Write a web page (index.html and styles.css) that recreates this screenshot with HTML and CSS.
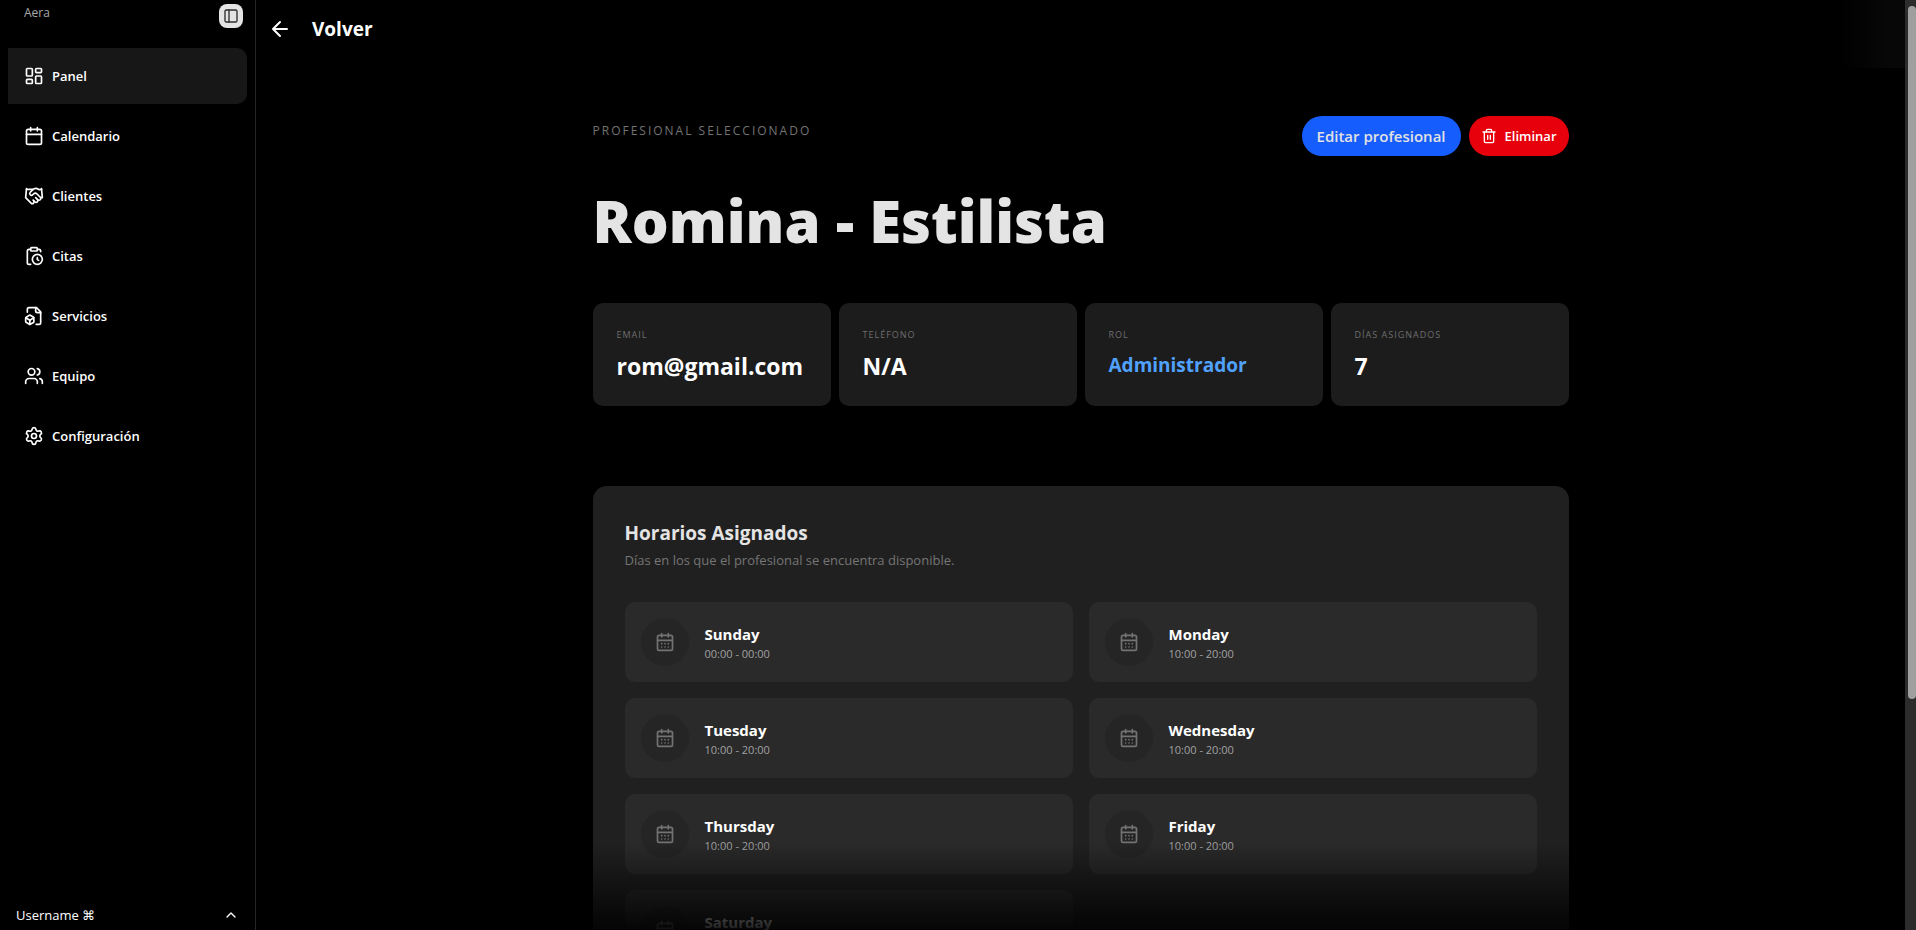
FILE: index.html
```html
<!DOCTYPE html>
<html lang="es">
<head>
    <meta charset="UTF-8">
    <meta name="viewport" content="width=device-width, initial-scale=1">
    <title>Aera</title>
    <link rel="stylesheet" href="styles.css">
</head>
<body>
    <!-- iconos compartidos -->
    <svg class="sprite" aria-hidden="true">
        <symbol id="cal-days" viewBox="0 0 24 24">
            <path d="M8 2v4M16 2v4M3 10h18M8 14h.01M12 14h.01M16 14h.01M8 18h.01M12 18h.01M16 18h.01"/>
            <rect width="18" height="18" x="3" y="4" rx="2"/>
        </symbol>
    </svg>

    <div class="app">
        <aside class="sidebar">
            <div class="brand">
                <span class="brand-name">Aera</span>
                <button class="toggle" aria-label="Menú">
                    <svg class="icon" viewBox="0 0 24 24"><rect width="18" height="18" x="3" y="3" rx="2"/><path d="M9 3v18"/></svg>
                </button>
            </div>
            <nav class="menu">
                <a href="#" class="menu-item active">
                    <svg class="icon" viewBox="0 0 24 24"><rect width="7" height="9" x="3" y="3" rx="1"/><rect width="7" height="5" x="14" y="3" rx="1"/><rect width="7" height="9" x="14" y="12" rx="1"/><rect width="7" height="5" x="3" y="16" rx="1"/></svg>
                    <span>Panel</span>
                </a>
                <a href="#" class="menu-item">
                    <svg class="icon" viewBox="0 0 24 24"><path d="M8 2v4M16 2v4M3 10h18"/><rect width="18" height="18" x="3" y="4" rx="2"/></svg>
                    <span>Calendario</span>
                </a>
                <a href="#" class="menu-item">
                    <svg class="icon" viewBox="0 0 24 24"><path d="m11 17 2 2a1 1 0 1 0 3-3"/><path d="m14 14 2.5 2.5a1 1 0 1 0 3-3l-3.88-3.88a3 3 0 0 0-4.24 0l-.88.88a1 1 0 1 1-3-3l2.81-2.81a5.79 5.79 0 0 1 7.06-.87l.47.28a2 2 0 0 0 1.42.25L21 4"/><path d="m21 3 1 11h-2"/><path d="M3 3 2 14l6.5 6.5a1 1 0 1 0 3-3"/><path d="M3 4h8"/></svg>
                    <span>Clientes</span>
                </a>
                <a href="#" class="menu-item">
                    <svg class="icon" viewBox="0 0 24 24"><path d="M16 14v2.2l1.6 1"/><path d="M16 4h2a2 2 0 0 1 2 2v.832"/><path d="M8 4H6a2 2 0 0 0-2 2v14a2 2 0 0 0 2 2h2"/><circle cx="16" cy="16" r="6"/><rect x="8" y="2" width="8" height="4" rx="1"/></svg>
                    <span>Citas</span>
                </a>
                <a href="#" class="menu-item">
                    <svg class="icon" viewBox="0 0 24 24"><path d="M14 2v4a2 2 0 0 0 2 2h4"/><path d="M14.5 22H18a2 2 0 0 0 2-2V7l-5-5H6a2 2 0 0 0-2 2v3.5"/><path d="m7 17-4.74-2.85"/><path d="m7 17 4.74-2.85"/><path d="M7 17v5"/><path d="M11.7 14.2a1 1 0 0 0-.5-.9l-3.7-2.1a1 1 0 0 0-1 0l-3.9 2.2a1 1 0 0 0-.6.9v4.4a1 1 0 0 0 .5.9l3.9 2.3a1 1 0 0 0 1.1 0l3.8-2.2a1 1 0 0 0 .6-.9z"/></svg>
                    <span>Servicios</span>
                </a>
                <a href="#" class="menu-item">
                    <svg class="icon" viewBox="0 0 24 24"><path d="M16 21v-2a4 4 0 0 0-4-4H6a4 4 0 0 0-4 4v2"/><circle cx="9" cy="7" r="4"/><path d="M22 21v-2a4 4 0 0 0-3-3.87"/><path d="M16 3.13a4 4 0 0 1 0 7.75"/></svg>
                    <span>Equipo</span>
                </a>
                <a href="#" class="menu-item">
                    <svg class="icon" viewBox="0 0 24 24"><path d="M9.671 4.136a2.34 2.34 0 0 1 4.659 0 2.34 2.34 0 0 0 3.319 1.915 2.34 2.34 0 0 1 2.33 4.033 2.34 2.34 0 0 0 0 3.831 2.34 2.34 0 0 1-2.33 4.033 2.34 2.34 0 0 0-3.319 1.915 2.34 2.34 0 0 1-4.659 0 2.34 2.34 0 0 0-3.32-1.915 2.34 2.34 0 0 1-2.33-4.033 2.34 2.34 0 0 0 0-3.831A2.34 2.34 0 0 1 6.35 6.051a2.34 2.34 0 0 0 3.319-1.915"/><circle cx="12" cy="12" r="3"/></svg>
                    <span>Configuración</span>
                </a>
            </nav>
            <button class="user">
                <span>Username ⌘</span>
                <svg class="icon" viewBox="0 0 24 24"><path d="m18 15-6-6-6 6"/></svg>
            </button>
        </aside>

        <main class="main">
            <header class="topbar">
                <button class="back" aria-label="Volver">
                    <svg class="icon" viewBox="0 0 24 24"><path d="m12 19-7-7 7-7M19 12H5"/></svg>
                </button>
                <h2 class="topbar-title">Volver</h2>
            </header>

            <div class="content">
                <section class="hero">
                    <div class="hero-row">
                        <p class="eyebrow">Profesional seleccionado</p>
                        <div class="actions">
                            <button class="btn btn-edit">Editar profesional</button>
                            <button class="btn btn-delete">
                                <svg class="icon" viewBox="0 0 24 24"><path d="M3 6h18M19 6v14a2 2 0 0 1-2 2H7a2 2 0 0 1-2-2V6M8 6V4a2 2 0 0 1 2-2h4a2 2 0 0 1 2 2v2M10 11v6M14 11v6"/></svg>
                                Eliminar
                            </button>
                        </div>
                    </div>
                    <h1 class="name">Romina - Estilista</h1>
                </section>

                <section class="stats">
                    <div class="stat">
                        <p class="stat-label">Email</p>
                        <p class="stat-value">rom@gmail.com</p>
                    </div>
                    <div class="stat">
                        <p class="stat-label">Teléfono</p>
                        <p class="stat-value">N/A</p>
                    </div>
                    <div class="stat">
                        <p class="stat-label">Rol</p>
                        <p class="stat-value role">Administrador</p>
                    </div>
                    <div class="stat">
                        <p class="stat-label">Días asignados</p>
                        <p class="stat-value">7</p>
                    </div>
                </section>

                <section class="schedule">
                    <h3 class="schedule-title">Horarios Asignados</h3>
                    <p class="schedule-text">Días en los que el profesional se encuentra disponible.</p>
                    <div class="days">
                        <div class="day">
                            <span class="day-icon"><svg class="icon"><use href="#cal-days"/></svg></span>
                            <div><p class="day-name">Sunday</p><p class="day-time">00:00 - 00:00</p></div>
                        </div>
                        <div class="day">
                            <span class="day-icon"><svg class="icon"><use href="#cal-days"/></svg></span>
                            <div><p class="day-name">Monday</p><p class="day-time">10:00 - 20:00</p></div>
                        </div>
                        <div class="day">
                            <span class="day-icon"><svg class="icon"><use href="#cal-days"/></svg></span>
                            <div><p class="day-name">Tuesday</p><p class="day-time">10:00 - 20:00</p></div>
                        </div>
                        <div class="day">
                            <span class="day-icon"><svg class="icon"><use href="#cal-days"/></svg></span>
                            <div><p class="day-name">Wednesday</p><p class="day-time">10:00 - 20:00</p></div>
                        </div>
                        <div class="day">
                            <span class="day-icon"><svg class="icon"><use href="#cal-days"/></svg></span>
                            <div><p class="day-name">Thursday</p><p class="day-time">10:00 - 20:00</p></div>
                        </div>
                        <div class="day">
                            <span class="day-icon"><svg class="icon"><use href="#cal-days"/></svg></span>
                            <div><p class="day-name">Friday</p><p class="day-time">10:00 - 20:00</p></div>
                        </div>
                        <div class="day">
                            <span class="day-icon"><svg class="icon"><use href="#cal-days"/></svg></span>
                            <div><p class="day-name">Saturday</p><p class="day-time">10:00 - 20:00</p></div>
                        </div>
                    </div>
                </section>
            </div>
            <div class="fade"></div>
        </main>

        <div class="scroll"><div class="scroll-thumb"></div></div>
    </div>
</body>
</html>
```
FILE: styles.css
```css
* {
    box-sizing: border-box;
    margin: 0;
    padding: 0;
}

body {
    background: #000;
    color: #fff;
    font-family: "Segoe UI", "Open Sans", "Noto Sans", sans-serif;
    font-size: 13px;
    line-height: 20px;
}

button {
    border: none;
    background: none;
    color: inherit;
    font: inherit;
    cursor: pointer;
}

a {
    color: inherit;
    text-decoration: none;
}

.sprite {
    display: none;
}

.icon {
    flex: none;
    width: 20px;
    height: 20px;
    fill: none;
    stroke: currentColor;
    stroke-width: 2;
    stroke-linecap: round;
    stroke-linejoin: round;
}

.app {
    display: flex;
    height: 100vh;
    overflow: hidden;
}

/* barra lateral */
.sidebar {
    display: flex;
    flex-direction: column;
    width: 256px;
    flex: none;
    border-right: 1px solid #262626;
}

.brand {
    display: flex;
    justify-content: space-between;
    height: 48px;
    padding: 4px 12px 0 24px;
}

.brand-name {
    color: #a8a8a8;
    font-size: 12px;
    font-weight: 500;
    line-height: 18px;
}

.toggle {
    display: flex;
    align-items: center;
    justify-content: center;
    width: 24px;
    height: 24px;
    border-radius: 8px;
    background: #e4e4e4;
    color: #2c2c2c;
}

.toggle .icon {
    width: 16px;
    height: 16px;
}

.menu {
    display: flex;
    flex-direction: column;
    gap: 4px;
    padding: 0 8px;
}

.menu-item {
    display: flex;
    align-items: center;
    gap: 8px;
    height: 56px;
    padding: 0 16px;
    border-radius: 0 10px 10px 0;
    font-weight: 600;
}

.menu-item.active {
    background: #171717;
}

.user {
    display: flex;
    align-items: center;
    justify-content: space-between;
    height: 30px;
    margin-top: auto;
    padding: 0 16px;
}

.user .icon {
    width: 16px;
    height: 16px;
}

/* contenido */
.main {
    position: relative;
    flex: 1;
    min-width: 0;
    overflow: hidden;
}

.topbar {
    display: flex;
    align-items: center;
    gap: 20px;
    height: 68px;
    padding: 0 12px 11px;
    background: linear-gradient(to right, #000 96%, #070707 99%);
}

.back {
    display: flex;
    align-items: center;
    justify-content: center;
    width: 24px;
    height: 24px;
}

.back .icon {
    width: 24px;
    height: 24px;
}

.topbar-title {
    font-size: 19px;
    font-weight: 700;
    line-height: 28px;
}

.content {
    max-width: 976px;
    margin: 0 auto;
    padding-top: 48px;
}

.hero-row {
    display: flex;
    justify-content: space-between;
}

.eyebrow {
    padding-top: 5px;
    color: #737373;
    font-size: 12px;
    letter-spacing: 2px;
    text-transform: uppercase;
}

.actions {
    display: flex;
    gap: 8px;
}

.btn {
    display: flex;
    align-items: center;
    gap: 8px;
    height: 40px;
    border-radius: 20px;
    font-weight: 600;
}

.btn-edit {
    padding: 0 15px;
    background: #155dfc;
    color: #e2e2e2;
    font-size: 15px;
}

.btn-delete {
    padding: 0 12px;
    background: #e7000b;
}

.btn-delete .icon {
    width: 16px;
    height: 16px;
}

.name {
    margin-top: 35px;
    color: #e4e4e4;
    font-size: 58px;
    font-weight: 800;
    line-height: 60px;
}

.stats {
    display: grid;
    grid-template-columns: repeat(4, 1fr);
    gap: 8px;
    margin-top: 52px;
}

.stat {
    min-height: 103px;
    padding: 24px;
    border-radius: 10px;
    background: #1c1c1c;
}

.stat-label {
    color: #6e6e6e;
    font-size: 9px;
    line-height: 15px;
    letter-spacing: 1px;
    text-transform: uppercase;
}

.stat-value {
    margin-top: 9px;
    font-size: 23px;
    font-weight: 700;
    line-height: 31px;
}

.stat-value.role {
    color: #51a2ff;
    font-size: 19px;
    line-height: 28px;
}

.schedule {
    margin-top: 80px;
    padding: 33px 32px 32px;
    border-radius: 14px;
    background: #202020;
}

.schedule-title {
    color: #e4e4e4;
    font-size: 19px;
    font-weight: 700;
    line-height: 28px;
}

.schedule-text {
    margin-top: 3px;
    color: #757575;
}

.days {
    display: grid;
    grid-template-columns: 1fr 1fr;
    gap: 16px;
    margin-top: 32px;
}

.day {
    display: flex;
    align-items: center;
    gap: 16px;
    height: 80px;
    padding: 0 16px;
    border-radius: 10px;
    background: #2a2a2a;
}

.day-icon {
    display: flex;
    align-items: center;
    justify-content: center;
    width: 48px;
    height: 48px;
    border-radius: 50%;
    background: #252525;
    color: #737373;
}

.day-name {
    font-size: 15px;
    font-weight: 700;
    line-height: 24px;
}

.day-time {
    color: #a1a1a1;
    font-size: 11px;
    line-height: 16px;
}

/* degradado inferior sobre la lista */
.fade {
    position: absolute;
    left: 0;
    right: 0;
    bottom: 0;
    height: 88px;
    background: linear-gradient(to top, rgba(0, 0, 0, 0.88), transparent);
    pointer-events: none;
}

/* barra de desplazamiento */
.scroll {
    flex: none;
    width: 11px;
    padding: 6px 0 0 3px;
    background: #2c2c2c;
}

.scroll-thumb {
    height: 75%;
    border-radius: 4px;
    background: #9f9f9f;
}
```
